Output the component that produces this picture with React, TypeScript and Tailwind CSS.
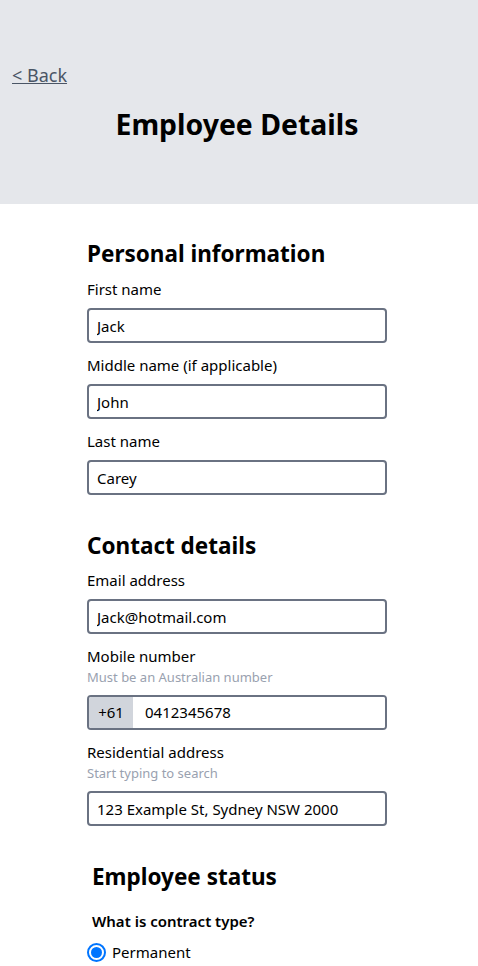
import React from "react";

const font = { fontFamily: '"Noto Sans", "Open Sans", sans-serif' };

function Field({
  label,
  hint,
  value,
}: {
  label: string;
  hint?: string;
  value: string;
}) {
  return (
    <div className="mb-[10px]">
      <label className="block text-[15px] leading-6 text-black">{label}</label>
      {hint ? (
        <div className="text-[13px] leading-[18px] text-gray-400">{hint}</div>
      ) : null}
      <input
        readOnly
        value={value}
        className={`${hint ? "mt-[9px]" : "mt-[7px]"} block h-[35px] w-full rounded border-2 border-gray-500 bg-white px-2 text-[15px] text-black outline-none`}
      />
    </div>
  );
}

export default function App() {
  return (
    <div className="min-h-screen bg-white" style={font}>
      {/* header */}
      <header className="h-[204px] bg-gray-200 pt-[61px]">
        <a href="#" className="ml-3 text-lg leading-7 text-gray-600 underline">
          &lt; Back
        </a>
        <h1 className="mt-[17px] pr-1 text-center text-[28.4px] font-bold leading-9 text-black">
          Employee Details
        </h1>
      </header>

      <main className="ml-[87px] w-[300px] pt-[34px]">
        <section>
          <h2 className="mb-[7px] text-[22.5px] font-bold leading-8">Personal information</h2>
          <Field label="First name" value="Jack" />
          <Field label="Middle name (if applicable)" value="John" />
          <Field label="Last name" value="Carey" />
        </section>

        <section className="mt-[35px]">
          <h2 className="mb-[6px] text-[22.5px] font-bold leading-8">Contact details</h2>
          <Field label="Email address" value="Jack@hotmail.com" />

          <div className="mb-[10px]">
            <label className="block text-[15px] leading-6">Mobile number</label>
            <div className="text-[13px] leading-[18px] text-gray-400">
              Must be an Australian number
            </div>
            <div className="mt-[9px] flex h-[35px] overflow-hidden rounded border-2 border-gray-500">
              <span className="flex w-[44px] items-center justify-center bg-gray-300 text-[15px] text-black">
                +61
              </span>
              <input
                readOnly
                value="0412345678"
                className="min-w-0 flex-1 bg-white px-3 text-[15px] text-black outline-none"
              />
            </div>
          </div>

          <Field
            label="Residential address"
            hint="Start typing to search"
            value="123 Example St, Sydney NSW 2000"
          />
        </section>

        <fieldset className="mt-[35px]">
          <h2 className="ml-[5px] text-[22.5px] font-bold leading-8">Employee status</h2>
          <p className="ml-[5px] mt-[16px] text-[15px] font-semibold leading-6">
            What is contract type?
          </p>
          <label className="mt-[7px] flex items-center gap-[6px] text-[15px] leading-6">
            <span className="flex h-[19px] w-[19px] items-center justify-center rounded-full border-2 border-[#0075ff] bg-white">
              <span className="h-[11px] w-[11px] rounded-full bg-[#0075ff]" />
            </span>
            Permanent
          </label>
        </fieldset>
      </main>
    </div>
  );
}
